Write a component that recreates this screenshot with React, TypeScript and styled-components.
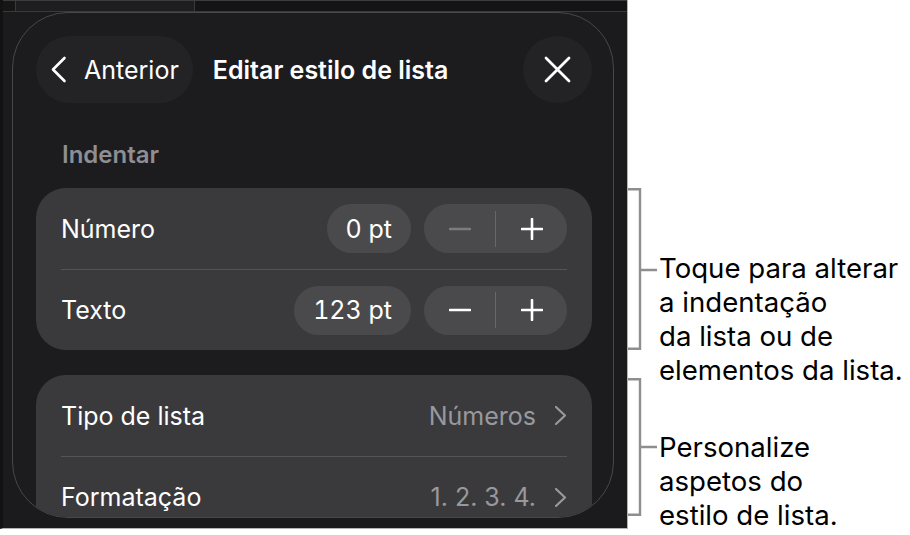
import React from 'react';
import styled, { createGlobalStyle } from 'styled-components';

const Global = createGlobalStyle`
  html, body { margin: 0; padding: 0; background: #ffffff; }
  body { font-family: Inter, "Noto Sans", sans-serif; -webkit-font-smoothing: antialiased; }
  * { box-sizing: border-box; }
`;

const Page = styled.div`
  display: flex;
  width: 910px;
  height: 535px;
  background: #ffffff;
  overflow: hidden;
`;

const Screen = styled.div`
  flex-shrink: 0;
  width: 628px;
  height: 529px;
  border-left: 3px solid #121213;
  border-right: 1px solid #b4b4b4;
  border-bottom: 1px solid #b4b4b4;
  background: #1b1b1d;
  display: flex;
  flex-direction: column;
  overflow: hidden;
`;

const TopStrip = styled.div`
  flex-shrink: 0;
  height: 12px;
  display: flex;
  border-top: 1px solid #3c3c3e;
  border-bottom: 1px solid #3a3a3c;
`;

const StripCell = styled.div<{ $w?: number; $bg: string }>`
  ${(p) => (p.$w ? `width: ${p.$w}px;` : 'flex: 1;')}
  background: ${(p) => p.$bg};
  border-right: 1px solid #3a3a3c;
  &:last-child { border-right: none; }
`;

const Panel = styled.div`
  margin-left: 9px;
  width: 602px;
  height: 506px;
  flex-shrink: 0;
  border: 1px solid #48484a;
  border-radius: 56px;
  background: #1c1c1e;
  padding: 23px 21px 0 23px;
  overflow: hidden;
  display: flex;
  flex-direction: column;
`;

const Header = styled.div`
  display: flex;
  align-items: center;
  height: 67px;
  flex-shrink: 0;
`;

const BackPill = styled.div`
  height: 67px;
  display: flex;
  align-items: center;
  gap: 17px;
  padding: 0 14px 0 14px;
  border-radius: 34px;
  background: #232325;
  color: #ffffff;
  font-size: 25px;
`;

const Title = styled.div`
  margin-left: 20px;
  color: #ffffff;
  font-size: 25px;
  font-weight: 600;
`;

const CloseBtn = styled.div`
  margin-left: auto;
  width: 69px;
  height: 67px;
  border-radius: 50%;
  background: #232325;
  display: flex;
  align-items: center;
  justify-content: center;
`;

const SectionLabel = styled.div`
  margin: 37px 0 18px 26px;
  line-height: 30px;
  font-size: 24px;
  font-weight: 600;
  color: #8e8e93;
`;

const Card = styled.div<{ $mt?: number }>`
  flex-shrink: 0;
  margin-top: ${(p) => p.$mt ?? 0}px;
  background: #3a3a3c;
  border-radius: 30px;
  padding: 0 25px;
`;

const Row = styled.div`
  height: 81px;
  display: flex;
  align-items: center;
  gap: 13px;
  & + & { border-top: 1px solid #545456; height: 81px; }
`;

const RowLabel = styled.div`
  flex: 1;
  color: #ffffff;
  font-size: 25px;
`;

const ValuePill = styled.div`
  height: 49px;
  padding: 0 19px;
  border-radius: 25px;
  background: #4a4a4c;
  color: #ffffff;
  font-size: 25px;
  font-variant-numeric: tabular-nums;
  display: flex;
  align-items: center;
`;

const Stepper = styled.div`
  width: 143px;
  height: 49px;
  border-radius: 25px;
  background: #4a4a4c;
  display: flex;
  align-items: center;
`;

const StepBtn = styled.div`
  flex: 1;
  height: 100%;
  display: flex;
  align-items: center;
  justify-content: center;
`;

const StepDivider = styled.div`
  width: 1px;
  height: 36px;
  background: #68686b;
`;

const RowValue = styled.div`
  display: flex;
  align-items: center;
  gap: 18px;
  color: #98989d;
  font-size: 25px;
`;

const Notes = styled.div`
  display: flex;
  flex-direction: column;
  padding-top: 188px;
`;

const Note = styled.div<{ $h: number; $mt?: number }>`
  display: flex;
  height: ${(p) => p.$h}px;
  margin-top: ${(p) => p.$mt ?? 0}px;
`;

const NoteText = styled.div<{ $mt: number }>`
  margin-top: ${(p) => p.$mt}px;
  padding-left: 1px;
  font-size: 27.6px;
  line-height: 34px;
  color: #000000;
  white-space: nowrap;
`;

const ChevronLeft = () => (
  <svg width="17" height="27" viewBox="0 0 17 27" fill="none">
    <path d="M14.5 2 L3 13.5 L14.5 25" stroke="#ffffff" strokeWidth="2.6" strokeLinecap="round" strokeLinejoin="round" />
  </svg>
);

const CloseIcon = () => (
  <svg width="27" height="27" viewBox="0 0 27 27" fill="none">
    <path d="M2 2 L25 25 M25 2 L2 25" stroke="#ffffff" strokeWidth="2.8" strokeLinecap="round" />
  </svg>
);

const MinusIcon = ({ color }: { color: string }) => (
  <svg width="22" height="22" viewBox="0 0 22 22" fill="none">
    <path d="M1 11 H21" stroke={color} strokeWidth="2.6" strokeLinecap="round" />
  </svg>
);

const PlusIcon = () => (
  <svg width="22" height="22" viewBox="0 0 22 22" fill="none">
    <path d="M1 11 H21 M11 1 V21" stroke="#ffffff" strokeWidth="2.6" strokeLinecap="round" />
  </svg>
);

const ChevronRight = () => (
  <svg width="13" height="21" viewBox="0 0 13 21" fill="none">
    <path d="M2 2 L11 10.5 L2 19" stroke="#98989d" strokeWidth="2.2" strokeLinecap="round" strokeLinejoin="round" />
  </svg>
);

const Bracket = ({ h, tick }: { h: number; tick: number }) => (
  <svg width="30" height={h} viewBox={`0 0 30 ${h}`} fill="none" style={{ flexShrink: 0 }}>
    <path d={`M0 1.2 H12 V${h - 1.2} H0 M12 ${tick} H29`} stroke="#8e8e8e" strokeWidth="2.4" />
  </svg>
);

const StepRow = ({ label, value, minusDisabled }: { label: string; value: string; minusDisabled?: boolean }) => (
  <Row>
    <RowLabel>{label}</RowLabel>
    <ValuePill>{value}</ValuePill>
    <Stepper>
      <StepBtn>
        <MinusIcon color={minusDisabled ? '#7b7b7f' : '#ffffff'} />
      </StepBtn>
      <StepDivider />
      <StepBtn>
        <PlusIcon />
      </StepBtn>
    </Stepper>
  </Row>
);

const NavRow = ({ label, value }: { label: string; value: string }) => (
  <Row>
    <RowLabel>{label}</RowLabel>
    <RowValue>
      {value}
      <ChevronRight />
    </RowValue>
  </Row>
);

export default function App() {
  return (
    <Page>
      <Global />
      <Screen>
        <TopStrip>
          <StripCell $w={13} $bg="#161617" />
          <StripCell $w={179} $bg="#1e1e20" />
          <StripCell $bg="#141416" />
        </TopStrip>
        <Panel>
          <Header>
            <BackPill>
              <ChevronLeft />
              Anterior
            </BackPill>
            <Title>Editar estilo de lista</Title>
            <CloseBtn>
              <CloseIcon />
            </CloseBtn>
          </Header>
          <SectionLabel>Indentar</SectionLabel>
          <Card>
            <StepRow label="Número" value="0 pt" minusDisabled />
            <StepRow label="Texto" value="123 pt" />
          </Card>
          <Card $mt={25}>
            <NavRow label="Tipo de lista" value="Números" />
            <NavRow label="Formatação" value="1. 2. 3. 4." />
          </Card>
        </Panel>
      </Screen>
      <Notes>
        <Note $h={162}>
          <Bracket h={162} tick={82} />
          <NoteText $mt={63}>
            Toque para alterar
            <br />a indentação
            <br />da lista ou de
            <br />elementos da lista.
          </NoteText>
        </Note>
        <Note $h={138} $mt={28}>
          <Bracket h={138} tick={69} />
          <NoteText $mt={52}>
            Personalize
            <br />aspetos do
            <br />estilo de lista.
          </NoteText>
        </Note>
      </Notes>
    </Page>
  );
}
